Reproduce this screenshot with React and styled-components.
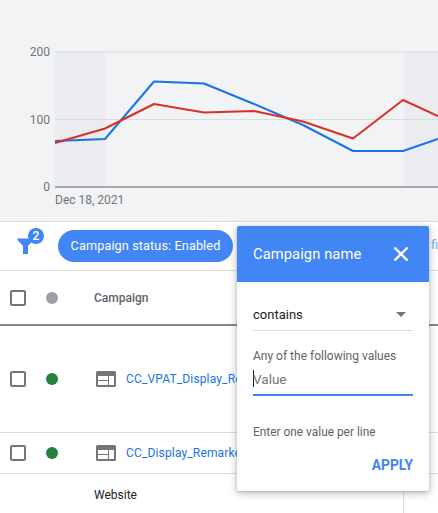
import React from "react";
import styled, { createGlobalStyle } from "styled-components";

const Global = createGlobalStyle`
  html, body { margin: 0; padding: 0; background: #fff; }
  body { font-family: Roboto, "Liberation Sans", sans-serif; }
  #root { width: 438px; height: 513px; overflow: hidden; }
`;

const Page = styled.div`
  position: relative;
  width: 438px;
  height: 513px;
  overflow: hidden;
  background: #fff;
`;

const ChartPanel = styled.section`
  height: 221px;
  background: #f1f3f4;
  border-bottom: 1px solid #dadce0;
`;

const ChartSvg = styled.svg`
  display: block;
`;

const AxisLabel = styled.text`
  font-family: Roboto, sans-serif;
  font-size: 12px;
  fill: #70757a;
`;

const FilterBar = styled.div`
  height: 49px;
  display: flex;
  align-items: center;
  padding-left: 17px;
  border-bottom: 1px solid #dadce0;
  box-sizing: border-box;
  position: relative;
`;

const FilterIconWrap = styled.div`
  position: relative;
  width: 28px;
  height: 28px;
  margin-right: 13px;
  flex: none;
`;

const Badge = styled.span`
  position: absolute;
  left: 11px;
  top: -4px;
  width: 16px;
  height: 16px;
  border-radius: 50%;
  background: #4285f4;
  color: #fff;
  font-size: 12px;
  font-weight: 500;
  line-height: 16px;
  text-align: center;
`;

const Chip = styled.div`
  height: 32px;
  width: 175px;
  flex: none;
  box-sizing: border-box;
  border-radius: 16px;
  background: #4285f4;
  color: #fff;
  font-size: 12.7px;
  letter-spacing: 0.1px;
  line-height: 32px;
  text-align: center;
  white-space: nowrap;
`;

const AddFilter = styled.span`
  position: absolute;
  left: 431px;
  top: 16px;
  color: #8ab4f8;
  font-size: 12px;
  font-weight: 500;
`;

const Row = styled.div`
  display: grid;
  grid-template-columns: 36px 48px 1fr;
  align-items: center;
  height: ${(p) => p.$h}px;
  box-sizing: border-box;
  padding-left: 10px;
  padding-top: ${(p) => p.$pt || 0}px;
  border-bottom: ${(p) => p.$line || "1px solid #dadce0"};
`;

const Check = styled.span`
  width: 16px;
  height: 16px;
  box-sizing: border-box;
  border: 2px solid #757575;
  border-radius: 2px;
  display: block;
`;

const Dot = styled.span`
  width: 12px;
  height: 12px;
  border-radius: 50%;
  background: ${(p) => p.$color};
  display: block;
`;

const HeaderCell = styled.span`
  color: #5f6368;
  font-size: 12px;
  font-weight: 500;
  white-space: nowrap;
`;

const NameCell = styled.div`
  display: flex;
  align-items: center;
  gap: 10px;
  white-space: nowrap;
  margin-left: 2px;
`;

const CampaignLink = styled.span`
  color: #1a73e8;
  font-size: 12px;
  font-weight: 400;
  letter-spacing: 0.15px;
  width: 111px;
  overflow: hidden;
`;

const TypeText = styled.span`
  grid-column: 3;
  color: #202124;
  font-size: 12px;
`;

const ColumnRule = styled.div`
  position: absolute;
  left: 403px;
  top: 474px;
  bottom: 0;
  width: 1px;
  background: #dadce0;
`;

const Dialog = styled.div`
  position: absolute;
  left: 237px;
  top: 226px;
  width: 192px;
  height: 265px;
  background: #fff;
  border-radius: 2px;
  box-shadow: 0 2px 8px rgba(60, 64, 67, 0.35), 0 1px 3px rgba(60, 64, 67, 0.2);
  display: flex;
  flex-direction: column;
`;

const DialogHeader = styled.header`
  height: 56px;
  flex: none;
  background: #4285f4;
  border-radius: 2px 2px 0 0;
  color: #fff;
  display: flex;
  align-items: center;
  justify-content: space-between;
  padding: 0 20px 0 16px;
  font-size: 14.7px;
  letter-spacing: 0.1px;
`;

const DialogBody = styled.div`
  padding: 0 16px;
  display: flex;
  flex-direction: column;
`;

const SelectBox = styled.div`
  margin-top: 16px;
  height: 32px;
  border-bottom: 1px solid #dadce0;
  display: flex;
  align-items: center;
  justify-content: space-between;
  color: #202124;
  font-size: 13px;
  padding-right: 7px;
`;

const Arrow = styled.span`
  width: 0;
  height: 0;
  border-left: 5px solid transparent;
  border-right: 5px solid transparent;
  border-top: 5px solid #757575;
`;

const FieldLabel = styled.div`
  margin-top: 18px;
  color: #5f6368;
  font-size: 12px;
  line-height: 14px;
  white-space: nowrap;
`;

const ValueInput = styled.div`
  margin-top: 2px;
  height: 27px;
  padding-bottom: 2px;
  border-bottom: 2px solid #4285f4;
  display: flex;
  align-items: center;
  color: #757575;
  font-size: 13.5px;
`;

const Caret = styled.span`
  width: 1px;
  height: 17px;
  background: #202124;
  flex: none;
`;

const ValueText = styled.span`
  margin-left: -1px;
`;

const Hint = styled.div`
  margin-top: 29px;
  color: #5f6368;
  font-size: 11.9px;
  line-height: 14px;
  white-space: nowrap;
`;

const ApplyRow = styled.div`
  margin-top: 18px;
  display: flex;
  justify-content: flex-end;
`;

const ApplyButton = styled.button`
  border: 0;
  background: none;
  padding: 0;
  color: #4285f4;
  font: 700 13.8px Roboto, sans-serif;
`;

const TypeIcon = () => (
  <svg width="20" height="16" viewBox="0 0 20 16" fill="none">
    <rect x="0" y="0" width="20" height="16" rx="1.5" fill="#757575" />
    <rect x="2" y="5" width="10" height="4" fill="#fff" />
    <rect x="2" y="10" width="10" height="4" fill="#fff" />
    <rect x="13" y="5" width="5" height="9" fill="#fff" />
  </svg>
);

const toPath = (pts) => pts.map(([x, y]) => `${x},${y}`).join(" ");

const blue = [[55, 141], [105, 139], [154, 81.5], [204, 83.5], [254, 104], [303, 125], [353, 151], [403, 151], [438, 139]];
const red = [[55, 143], [105, 128.5], [154, 104], [204, 112.5], [254, 111], [303, 121.5], [353, 138.5], [403, 100], [438, 116]];

export default function App() {
  return (
    <Page>
      <Global />
      <ChartPanel>
        <ChartSvg width="438" height="221" viewBox="0 0 438 221">
          <rect x="55" y="52" width="50" height="135" fill="#e8eaed" opacity="0.75" />
          <rect x="404" y="52" width="34" height="135" fill="#e8eaed" opacity="0.75" />
          <rect x="55" y="51" width="383" height="2" fill="#e4e6e9" />
          <rect x="55" y="119" width="383" height="1" fill="#dadce0" />
          <rect x="55" y="186" width="383" height="2" fill="#a8a9ac" />
          <polyline points={toPath(blue)} fill="none" stroke="#1a73e8" strokeWidth="2" strokeLinejoin="round" />
          <polyline points={toPath(red)} fill="none" stroke="#d93025" strokeWidth="2" strokeLinejoin="round" />
          <AxisLabel x="50" y="56" textAnchor="end">200</AxisLabel>
          <AxisLabel x="50" y="124" textAnchor="end">100</AxisLabel>
          <AxisLabel x="50" y="191" textAnchor="end">0</AxisLabel>
          <AxisLabel x="55" y="204">Dec 18, 2021</AxisLabel>
        </ChartSvg>
      </ChartPanel>

      <FilterBar>
        <FilterIconWrap>
          <svg width="28" height="28" viewBox="0 0 28 28">
            <path d="M0.5 6.5 H16.5 V8 L11 14 V22 H6 V14 L0.5 8 Z" fill="#4285f4" />
          </svg>
          <Badge>2</Badge>
        </FilterIconWrap>
        <Chip>Campaign status: Enabled</Chip>
        <AddFilter>fi</AddFilter>
      </FilterBar>

      <Row $h={55} $pt={1} $line="2px solid #85878a">
        <Check />
        <Dot $color="#9aa0a6" />
        <HeaderCell>Campaign</HeaderCell>
      </Row>
      <Row $h={107}>
        <Check />
        <Dot $color="#25813f" />
        <NameCell>
          <TypeIcon />
          <CampaignLink>CC_VPAT_Display_Remarketing</CampaignLink>
        </NameCell>
      </Row>
      <Row $h={41}>
        <Check />
        <Dot $color="#25813f" />
        <NameCell>
          <TypeIcon />
          <CampaignLink>CC_Display_Remarketing</CampaignLink>
        </NameCell>
      </Row>
      <Row $h={40} $pt={2} $line="none">
        <TypeText>Website</TypeText>
      </Row>
      <ColumnRule />

      <Dialog>
        <DialogHeader>
          Campaign name
          <svg width="16" height="16" viewBox="0 0 16 16">
            <path d="M1.5 1.5 L14.5 14.5 M14.5 1.5 L1.5 14.5" stroke="#fff" strokeWidth="2.4" fill="none" />
          </svg>
        </DialogHeader>
        <DialogBody>
          <SelectBox>
            contains
            <Arrow />
          </SelectBox>
          <FieldLabel>Any of the following values</FieldLabel>
          <ValueInput>
            <Caret />
            <ValueText>Value</ValueText>
          </ValueInput>
          <Hint>Enter one value per line</Hint>
          <ApplyRow>
            <ApplyButton>APPLY</ApplyButton>
          </ApplyRow>
        </DialogBody>
      </Dialog>
    </Page>
  );
}
